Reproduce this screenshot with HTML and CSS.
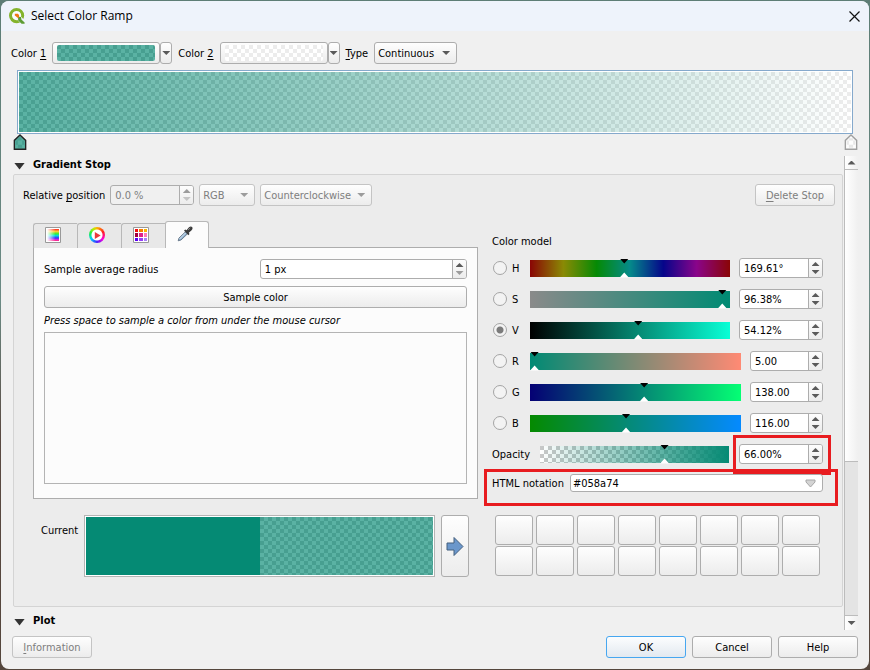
FILE: index.html
```html
<!DOCTYPE html>
<html lang="en">
<head>
<meta charset="utf-8">
<title>Select Color Ramp</title>
<link rel="stylesheet" href="styles.css">
</head>
<body>
<main class="window">
  <header class="titlebar">
    <svg class="logo" viewBox="0 0 16 16" aria-hidden="true">
      <circle cx="7.600" cy="7.600" r="6.100" fill="#fafcff" stroke="#83b32c" stroke-width="3"/>
      <path d="M8.500 8.500 14.600 14.800" stroke="#eef3fb" stroke-width="5"/>
      <path d="M9 8.800 12 9 12.400 11.400 15.600 14.600V15.800H12.600L9.200 12.400Z" fill="#5d9c33"/>
      <path d="M5.800 5.800H8.800L10 7V9.800H8.600L5.800 7.400Z" fill="#ee7913"/>
    </svg>
    <h1 class="title">Select Color Ramp</h1>
    <button class="close" aria-label="Close"><svg viewBox="0 0 11 11"><path d="M.5.5l10 10M10.500.5l-10 10" stroke="#111" stroke-width="1.200"/></svg></button>
  </header>

  <div class="toolbar">
    <label for="c1">Color <u>1</u></label>
    <div class="colorpick"><button id="c1" class="btn colorbtn"><span class="chip checker chip-a"></span></button><button class="btn drop" aria-label="Color 1 menu"><i class="down"></i></button></div>
    <label for="c2">Color <u>2</u></label>
    <div class="colorpick"><button id="c2" class="btn colorbtn"><span class="chip checker chip-b"></span></button><button class="btn drop" aria-label="Color 2 menu"><i class="down"></i></button></div>
    <label for="type"><u>T</u>ype</label>
    <div class="combo combo-type"><select id="type" class="btn"><option>Continuous</option></select><i class="down"></i></div>
  </div>

  <section class="ramp">
    <div class="ramp-frame"><div class="ramp-fill checker"></div></div>
    <div class="stops">
      <svg viewBox="0 0 12 15"><path d="M6 1 11.300 6V14.300H.7V6Z" fill="#5ab2a2" stroke="#222" stroke-width="1.300"/><path d="M6 2.500 7.500 4V6H3.500V5ZM2 6H4V10H2ZM4 10H8V13H4ZM8 6H10V10H8Z" fill="#489f91"/></svg>
      <svg viewBox="0 0 12 15"><path d="M6 1 11.300 6V14.300H.7V6Z" fill="#fdfdfd" stroke="#a0a0a0" stroke-width="1.300"/><path d="M4 4H8V6H4ZM2 6H4V10H2ZM4 10H8V13H4ZM8 6H10V10H8Z" fill="#e8e8e8"/></svg>
    </div>
  </section>

  <div class="scroller">
    <div class="content">
      <h2 class="section"><i class="fold"></i>Gradient Stop</h2>
      <section class="group">
        <div class="stoprow">
          <label for="pos">Relative <u>p</u>osition</label>
          <div class="spin spin-pos off"><input id="pos" value="0.0 %" disabled><span class="arrows"><i class="up"></i><i class="down pale"></i></span></div>
          <div class="combo combo-rgb"><select class="btn" aria-label="Color spec" disabled><option>RGB</option></select><i class="down"></i></div>
          <div class="combo combo-dir"><select class="btn" aria-label="Direction" disabled><option>Counterclockwise</option></select><i class="down"></i></div>
          <button class="btn std push" disabled><u>D</u>elete Stop</button>
        </div>

        <div class="columns">
          <div class="left">
            <div class="tabs" role="tablist">
              <button class="tab" role="tab" aria-label="Color ramp"><svg viewBox="0 0 16 16"><defs><linearGradient id="rb" x2="0" y2="1"><stop offset="0" stop-color="#f22"/><stop offset=".2" stop-color="#fc3"/><stop offset=".4" stop-color="#3e3"/><stop offset=".55" stop-color="#0dd"/><stop offset=".75" stop-color="#33f"/><stop offset=".9" stop-color="#e2d"/><stop offset="1" stop-color="#f36"/></linearGradient><linearGradient id="wf"><stop offset="0" stop-color="#fff"/><stop offset=".7" stop-color="#fff" stop-opacity="0"/></linearGradient></defs><path d="M.5.5h15v15H.5z" fill="#fff" stroke="#999"/><path d="M2 2h12v12H2z" fill="url(#rb)"/><path d="M2 2h12v12H2z" fill="url(#wf)"/></svg></button>
              <button class="tab" role="tab" aria-label="Color wheel"><span class="wheel"><svg viewBox="0 0 10 10"><path d="M2 1 8.500 5 2 9Z" fill="#e83a3a"/></svg></span></button>
              <button class="tab" role="tab" aria-label="Color swatches"><svg viewBox="0 0 16 16"><path d="M.5.5h15v15H.5z" fill="#fff" stroke="#999"/><path d="M2 2h3v3H2z" fill="#f01010"/><path d="M6 2h4v3H6z" fill="#f77b00"/><path d="M11 2h3v3h-3z" fill="#fbb400"/><path d="M2 6h3v4H2z" fill="#a0003c"/><path d="M6 6h4v4H6z" fill="#e0208a"/><path d="M11 6h3v4h-3z" fill="#ff7ab8"/><path d="M2 11h3v3H2z" fill="#5a00f0"/><path d="M6 11h4v3H6z" fill="#9440f4"/><path d="M11 11h3v3h-3z" fill="#a880f8"/></svg></button>
              <button class="tab active" role="tab" aria-label="Color picker" aria-selected="true"><svg viewBox="0 0 16 16"><path d="M1.200 14.800 2 12 8.500 5.800 10.500 7.800 4 14Z" fill="#8fb0cd" stroke="#56677a" stroke-width=".8"/><path d="M2.500 13 8.500 7" stroke="#dcebf7"/><path d="M7 4.500 8.300 3.500 9.500 4.300 12 1.300Q14-.2 15.300 1.200 16 2.800 14.600 4.300L11.800 6.700 12.500 8 11.300 9.200Z" fill="#3c3c3c"/><path d="M11 4 13.300 1.800" stroke="#888"/></svg></button>
            </div>
            <div class="panel">
              <div class="radius"><label for="rad">Sample average radius</label>
                <div class="spin"><input id="rad" value="1 px"><span class="arrows"><i class="up"></i><i class="down mid"></i></span></div></div>
              <button class="btn sample">Sample color</button>
              <p class="hint">Press space to sample a color from under the mouse cursor</p>
              <div class="samplebox"></div>
            </div>
          </div>

          <div class="right">
            <p class="model">Color model</p>
            <div class="row"><input class="radio" type="radio" name="m" id="h"><label class="key" for="h">H</label><div class="bar bar-h"><input type="range" aria-label="Hue" max="360" step="any" value="169.61"></div><div class="spin"><input aria-label="Hue value" value="169.61°"><span class="arrows"><i class="up"></i><i class="down"></i></span></div></div>
            <div class="row"><input class="radio" type="radio" name="m" id="s"><label class="key" for="s">S</label><div class="bar bar-s"><input type="range" aria-label="Saturation" max="100" step="any" value="96.38"></div><div class="spin"><input aria-label="Saturation value" value="96.38%"><span class="arrows"><i class="up"></i><i class="down"></i></span></div></div>
            <div class="row"><input class="radio" type="radio" name="m" id="v" checked><label class="key" for="v">V</label><div class="bar bar-v"><input type="range" aria-label="Value" max="100" step="any" value="54.12"></div><div class="spin"><input aria-label="Value amount" value="54.12%"><span class="arrows"><i class="up"></i><i class="down"></i></span></div></div>
            <div class="row"><input class="radio" type="radio" name="m" id="r"><label class="key" for="r">R</label><div class="bar bar-r"><input type="range" aria-label="Red" max="255" step="any" value="5"></div><div class="spin narrow"><input aria-label="Red value" value="5.00"><span class="arrows"><i class="up"></i><i class="down"></i></span></div></div>
            <div class="row"><input class="radio" type="radio" name="m" id="g"><label class="key" for="g">G</label><div class="bar bar-g"><input type="range" aria-label="Green" max="255" step="any" value="138"></div><div class="spin narrow"><input aria-label="Green value" value="138.00"><span class="arrows"><i class="up"></i><i class="down"></i></span></div></div>
            <div class="row"><input class="radio" type="radio" name="m" id="b"><label class="key" for="b">B</label><div class="bar bar-b"><input type="range" aria-label="Blue" max="255" step="any" value="116"></div><div class="spin narrow"><input aria-label="Blue value" value="116.00"><span class="arrows"><i class="up"></i><i class="down"></i></span></div></div>
            <div class="row"><label class="opacity" for="op">Opacity</label><div class="bar bar-o checker"><input id="op" type="range" max="100" step="any" value="66"></div><div class="spin marked"><input aria-label="Opacity value" value="66.00%"><span class="arrows"><i class="up"></i><i class="down"></i></span></div></div>
            <div class="html marked"><label for="hex">HTML notation</label><div class="hexbox"><input id="hex" value="#058a74"><svg viewBox="0 0 11 9" aria-hidden="true"><path d="M1 1H10V3L5.500 8 1 3Z" fill="#d4d4d4" stroke="#a6a6a6"/></svg></div></div>
          </div>

          <div class="current">
            <span class="curlabel">Current</span>
            <div class="preview"><div class="solid"></div><div class="sheer checker"></div></div>
            <button class="btn arrow" aria-label="Add to swatches"><svg viewBox="0 0 18 21"><path d="M1 7H8V1.500L17 10.500 8 19.500V14H1Z" fill="#6b97cb" stroke="#45607f"/></svg></button>
          </div>
          <div class="swatches">
            <button class="btn" aria-label="Swatch 1"></button><button class="btn" aria-label="Swatch 2"></button><button class="btn" aria-label="Swatch 3"></button><button class="btn" aria-label="Swatch 4"></button><button class="btn" aria-label="Swatch 5"></button><button class="btn" aria-label="Swatch 6"></button><button class="btn" aria-label="Swatch 7"></button><button class="btn" aria-label="Swatch 8"></button><button class="btn" aria-label="Swatch 9"></button><button class="btn" aria-label="Swatch 10"></button><button class="btn" aria-label="Swatch 11"></button><button class="btn" aria-label="Swatch 12"></button><button class="btn" aria-label="Swatch 13"></button><button class="btn" aria-label="Swatch 14"></button><button class="btn" aria-label="Swatch 15"></button><button class="btn" aria-label="Swatch 16"></button>
          </div>
        </div>
      </section>
      <h2 class="section plot"><i class="fold"></i>Plot</h2>
    </div>
    <div class="scrollbar"><span class="sb-end"><i class="up"></i></span><span class="sb-thumb"></span><span class="sb-track"></span><span class="sb-end sb-last"><i class="down"></i></span></div>
  </div>

  <footer class="footer">
    <button class="btn std" disabled><u>I</u>nformation</button>
    <button class="btn std push primary">OK</button>
    <button class="btn std">Cancel</button>
    <button class="btn std">Help</button>
  </footer>
</main>
</body>
</html>
```
FILE: styles.css
```css
* { box-sizing: border-box; }
body {
  margin: 0;
  padding: 1px;
  min-height: 100vh;
  background: linear-gradient(#5d7d75, #6b8a84 45%, #5a4a42 65%, #54463c);
  font: 11px/14px "DejaVu Sans Condensed", "Noto Sans", sans-serif;
  color: #000;
}
h1, h2, p { margin: 0; font-size: 11px; font-weight: normal; }
button, input, select { font: inherit; color: inherit; margin: 0; padding: 0; }
label { padding-top: 2px; }
u { text-underline-offset: 2px; }
svg { display: block; }
.window {
  background: #f0f0f0;
  border-radius: 8px;
  overflow: hidden;
  min-height: calc(100vh - 2px);
}

.titlebar {
  display: flex;
  align-items: center;
  height: 30px;
  padding: 0 9px 0 8px;
  background: #eef3fb;
}
.logo { width: 16px; height: 16px; }
.title { margin-left: 6px; font: 12px/16px "Open Sans", sans-serif; }
.close { margin-left: auto; border: 0; background: none; }
.close svg { width: 11px; height: 11px; }

.btn {
  border: 1px solid #adadad;
  border-radius: 3px;
  background: linear-gradient(#fefefe, #ececec);
}
.btn:disabled { border-color: #c4c4c4; color: #7e7e7e; opacity: 1; }
.std { width: 80px; height: 22px; padding-top: 1px; }
.push { margin-left: auto; }
.primary { border-color: #47a7f0; background: linear-gradient(#fcfdfe, #e2e9f0); }

.up, .down { display: block; width: 8px; height: 4px; background: #5a5a5a; }
.up { clip-path: polygon(50% 0, 100% 100%, 0 100%); }
.down { clip-path: polygon(0 0, 100% 0, 50% 100%); }
.off .up, select:disabled + .down, .mid { background: #9c9c9c; }
.pale { background: #c4c4c4; }

.checker {
  background: conic-gradient(#fff 25%, #c8c8c8 0 50%, #fff 0 75%, #c8c8c8 0) 0 0 / 8px 8px;
}

.toolbar { display: flex; align-items: center; gap: 6px; padding: 11px 10px 6px; }
.colorpick { display: flex; }
.colorbtn { width: 108px; height: 22px; padding: 2px 4px; }
.colorbtn .chip { display: block; height: 16px; border-radius: 2px; }
.chip-a { background-image: linear-gradient(#058a74a8, #058a74a8), conic-gradient(#fff 25%, #c8c8c8 0 50%, #fff 0 75%, #c8c8c8 0); }
.chip-b { background-image: linear-gradient(#ffffffa8, #ffffffa8), conic-gradient(#fff 25%, #c8c8c8 0 50%, #fff 0 75%, #c8c8c8 0); }
.drop { width: 12px; height: 22px; padding: 0 1px; }

.combo { position: relative; }
.combo select { width: 100%; height: 22px; padding: 2px 3px 0; appearance: none; }
.combo .down { position: absolute; right: 7px; top: 9px; pointer-events: none; }
.combo-type { width: 83px; }
.combo-rgb { width: 56px; }
.combo-dir { width: 112px; }

.ramp { padding: 0 11px 0 12px; }
.ramp-frame { margin: 0 5px 0 4px; padding: 1px; border: 1px solid #85a9cc; background: #fff; }
.ramp-fill {
  height: 60px;
  background-image: linear-gradient(90deg, #058a74a8, #ffffffa8), conic-gradient(#fff 25%, #c8c8c8 0 50%, #fff 0 75%, #c8c8c8 0);
  background-size: 100% 100%, 8px 8px;
}
.stops { display: flex; justify-content: space-between; }
.stops svg { width: 14px; height: 16px; }

.scroller { display: grid; grid-template-columns: minmax(0, 1fr) 14px; padding: 6px 11px 0 12px; }
.section { display: flex; align-items: center; gap: 8px; height: 18px; padding-left: 1px; font-weight: bold; }
.fold { width: 11px; height: 7px; margin-top: 2px; background: #333; clip-path: polygon(0 0, 100% 0, 50% 100%); }
.plot { margin-top: 5px; }
.group { margin-right: 1px; padding: 9px 7px 29px 9px; border: 1px solid #d4d4d4; border-radius: 2px; background: #ececec; }
.stoprow { display: flex; align-items: center; gap: 5px; }

.spin {
  display: flex;
  flex: none;
  width: 84px;
  height: 20px;
  border: 1px solid #adadad;
  border-radius: 3px;
  background: #fff;
}
.spin input { flex: 1; width: 0; min-width: 0; padding: 2px 4px 0; border: 0; background: none; }
.arrows {
  display: flex;
  flex-direction: column;
  justify-content: center;
  align-items: center;
  gap: 4px;
  width: 14px;
  border-left: 1px solid #adadad;
  border-radius: 0 2px 2px 0;
  background: linear-gradient(#fdfdfd, #ececec);
}
.narrow { width: 73px; }
.off { background: #f0f0f0; color: #7e7e7e; }

.columns {
  display: grid;
  grid-template-columns: minmax(0, 445fr) minmax(0, 331fr);
  column-gap: 14px;
  row-gap: 16px;
  padding: 15px 12px 0 10px;
}
.tabs { display: flex; align-items: flex-end; height: 27px; }
.tab {
  display: flex;
  justify-content: center;
  width: 44px;
  height: 25px;
  padding: 3px 5px 0 0;
  border: solid #b8b8b8;
  border-width: 1px 0 0 1px;
  border-radius: 3px 0 0 0;
  background: #e8e8e8;
}
.tab svg { width: 16px; height: 16px; }
.tab.active { position: relative; z-index: 1; height: 27px; padding-top: 4px; border-right-width: 1px; border-radius: 3px 3px 0 0; background: #fcfcfc; }
.wheel {
  display: grid;
  place-items: center;
  width: 16px;
  height: 16px;
  border-radius: 50%;
  background: radial-gradient(#fff 5px, #fff0 6px), conic-gradient(#ffb000, #f22, #f0d 35%, #42f 50%, #0cf 65%, #2e4 80%, #be0 92%, #ffb000);
}
.tab .wheel svg { width: 9px; height: 9px; }
.panel { margin-top: -1px; padding: 11px 10px 14px; border: 1px solid #adadad; background: #fcfcfc; }
.radius { display: flex; justify-content: space-between; align-items: center; }
.radius .spin { width: 49%; }
.sample { display: block; width: 100%; height: 22px; margin: 7px 0 6px; padding-top: 1px; }
.hint { font-style: italic; }
.samplebox { height: 152px; margin-top: 4px; border: 1px solid #b4b4b4; }

.model { padding: 14px 0 9px; }
.row { display: flex; align-items: center; height: 20px; margin-bottom: 11px; }
.radio { appearance: none; flex: none; width: 14px; height: 14px; margin: 0 5px 0 1px; border: 1px solid #a4a4a4; border-radius: 50%; background: #f3f3f3; }
.radio:checked { background: radial-gradient(circle, #7b7b7b 3px, #f3f3f3 4px); }
.key { width: 18px; }
.bar { display: flex; flex: 1; align-items: center; height: 17px; margin-right: 9px; }
.bar input { appearance: none; flex: 1; min-width: 0; height: 19px; margin: -1px -4px; background: none; }
.bar input::-webkit-slider-thumb {
  appearance: none;
  width: 9px;
  height: 19px;
  background: linear-gradient(#000 50%, #fff 50%);
  clip-path: polygon(0 0, 100% 0, 50% 5px, 50% 14px, 100% 100%, 0 100%, 50% 14px, 50% 5px);
}
.bar-h { background: linear-gradient(90deg, #8a0505, #8a8a05, #058a05, #058a8a, #05058a, #8a058a, #8a0505); }
.bar-s { background: linear-gradient(90deg, #8a8a8a, #008a73); }
.bar-v { background: linear-gradient(90deg, #000, #09ffd6); }
.bar-r { background: linear-gradient(90deg, #008a74, #ff8a74); }
.bar-g { background: linear-gradient(90deg, #050074, #05ff74); }
.bar-b { background: linear-gradient(90deg, #058a00, #058aff); }
.bar-o {
  margin-right: 10px;
  background-image: linear-gradient(90deg, #058a7400, #058a74), conic-gradient(#fff 25%, #c8c8c8 0 50%, #fff 0 75%, #c8c8c8 0);
  background-size: 100% 100%, 8px 8px;
}
.opacity { width: 48px; }
.marked { position: relative; }
.marked::after { content: ""; position: absolute; border: 3px solid #e81c20; pointer-events: none; }
.spin.marked::after { inset: -10px -9px -12px -7px; }
.html { display: flex; align-items: center; gap: 6px; margin-top: -1px; }
.html.marked::after { inset: -5px -15px -14px -8px; }
.hexbox { display: flex; flex: 1; align-items: center; height: 18px; padding-right: 6px; border: 1px solid #adadad; border-radius: 3px; background: #fff; }
.hexbox input { flex: 1; min-width: 0; padding: 1px 2px 0; border: 0; background: none; }
.hexbox svg { width: 11px; height: 9px; }

.current { display: flex; gap: 6px; height: 62px; padding: 0 9px 0 8px; }
.curlabel { padding-top: 9px; }
.preview { display: flex; flex: 1; padding: 1px; border: 1px solid #b4b4b4; background: #fff; }
.preview div { flex: 1; }
.solid { background: #058a74; }
.sheer { background-image: linear-gradient(#058a74a8, #058a74a8), conic-gradient(#fff 25%, #c8c8c8 0 50%, #fff 0 75%, #c8c8c8 0); }
.arrow { display: grid; place-items: center; width: 28px; }
.arrow svg { width: 18px; height: 21px; }
.swatches { display: grid; grid-template: repeat(2, 30px) / repeat(8, 1fr); gap: 1px 3px; padding: 0 3px; }

.scrollbar { display: flex; flex-direction: column; border-left: 1px solid #bcbcbc; background: linear-gradient(90deg, #fff, #f0f0f0); }
.sb-end { display: grid; place-items: center; height: 14px; border-bottom: 1px solid #bcbcbc; }
.sb-thumb { flex: 293; }
.sb-track { flex: 154; border: solid #bcbcbc; border-width: 1px 0; background: #e4e4e4; }
.sb-last { border: 0; }

.footer { display: flex; gap: 6px; padding: 6px 11px 10px; }
```
